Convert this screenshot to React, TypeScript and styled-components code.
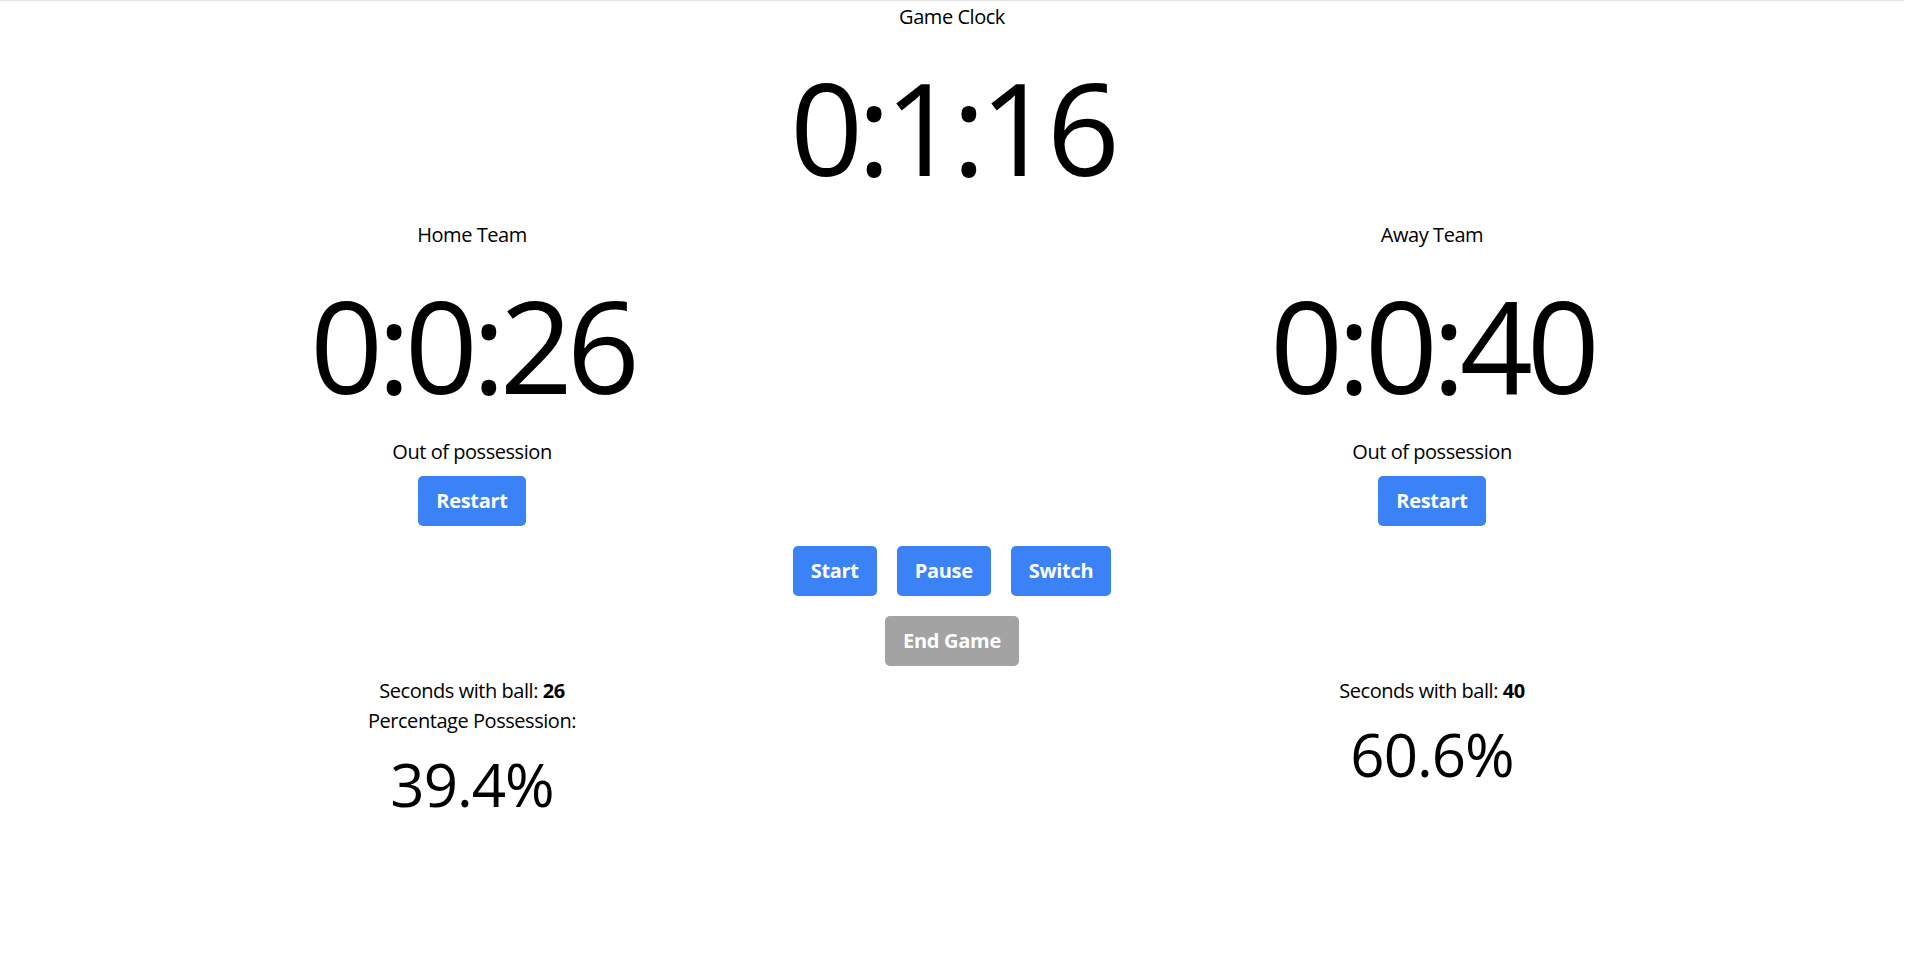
import React from "react";
import styled, { createGlobalStyle } from "styled-components";

const GlobalStyle = createGlobalStyle`
  html, body {
    margin: 0;
    padding: 0;
    background: #ffffff;
  }
  body {
    font-family: "Open Sans", "Noto Sans", "Liberation Sans", sans-serif;
    color: #000000;
  }
`;

const Page = styled.div`
  width: 1904px;
  min-height: 964px;
  border-top: 1px solid #e3e3e3;
  display: flex;
  flex-direction: column;
  align-items: center;
`;

const Label = styled.div`
  font-size: 20px;
  line-height: 30px;
  letter-spacing: -0.45px;
  text-align: center;
  padding-top: 1px;
  margin-bottom: -1px;
`;

const Clock = styled.div<{ $gap: number }>`
  font-size: 128px;
  line-height: 128px;
  letter-spacing: -6px;
  margin-top: ${(p) => p.$gap}px;
  text-align: center;
  white-space: nowrap;
`;

const Columns = styled.div<{ $top: number }>`
  display: grid;
  grid-template-columns: repeat(3, 480px);
  justify-content: center;
  width: 100%;
  margin-top: ${(p) => p.$top}px;
`;

const TeamColumn = styled.div`
  display: flex;
  flex-direction: column;
  align-items: center;
`;

const Status = styled(Label)`
  margin-top: 27px;
`;

const Button = styled.button<{ $tone?: "blue" | "gray" }>`
  height: 50px;
  padding: 0 18px;
  border: none;
  border-radius: 5px;
  background: ${(p) => (p.$tone === "gray" ? "#a3a3a3" : "#3b82f6")};
  color: #ffffff;
  font-family: "Open Sans", "Noto Sans", sans-serif;
  font-weight: 700;
  font-size: 20px;
  line-height: 30px;
  letter-spacing: -0.3px;
  cursor: pointer;
`;

const RestartButton = styled(Button)`
  margin-top: 10px;
  width: 108px;
`;

const Controls = styled.div`
  display: flex;
  flex-direction: column;
  align-items: center;
  gap: 20px;
  margin-top: 20px;
`;

const ButtonRow = styled.div`
  display: flex;
  gap: 20px;
`;

const Strong = styled.b`
  font-weight: 700;
`;

const Percent = styled.div`
  font-size: 60px;
  line-height: 60px;
  letter-spacing: -1px;
  margin-top: 19px;
  text-align: center;
`;

const Spacer = styled.div``;

type Team = {
  name: string;
  clock: string;
  seconds: number;
  percent: string;
  showPercentLabel: boolean;
};

const home: Team = {
  name: "Home Team",
  clock: "0:0:26",
  seconds: 26,
  percent: "39.4%",
  showPercentLabel: true,
};

const away: Team = {
  name: "Away Team",
  clock: "0:0:40",
  seconds: 40,
  percent: "60.6%",
  showPercentLabel: false,
};

const TeamPanel = ({ team }: { team: Team }) => (
  <TeamColumn>
    <Label>{team.name}</Label>
    <Clock $gap={32}>{team.clock}</Clock>
    <Status>Out of possession</Status>
    <RestartButton>Restart</RestartButton>
  </TeamColumn>
);

const StatsPanel = ({ team }: { team: Team }) => (
  <TeamColumn>
    <Label>
      Seconds with ball: <Strong>{team.seconds}</Strong>
    </Label>
    {team.showPercentLabel && <Label>Percentage Possession:</Label>}
    <Percent>{team.percent}</Percent>
  </TeamColumn>
);

export default function App() {
  return (
    <>
      <GlobalStyle />
      <Page>
        <Label>Game Clock</Label>
        <Clock $gap={32}>0:1:16</Clock>
        <Columns $top={28}>
          <TeamPanel team={home} />
          <Spacer />
          <TeamPanel team={away} />
        </Columns>
        <Controls>
          <ButtonRow>
            <Button>Start</Button>
            <Button>Pause</Button>
            <Button>Switch</Button>
          </ButtonRow>
          <Button $tone="gray">End Game</Button>
        </Controls>
        <Columns $top={9}>
          <StatsPanel team={home} />
          <Spacer />
          <StatsPanel team={away} />
        </Columns>
      </Page>
    </>
  );
}
